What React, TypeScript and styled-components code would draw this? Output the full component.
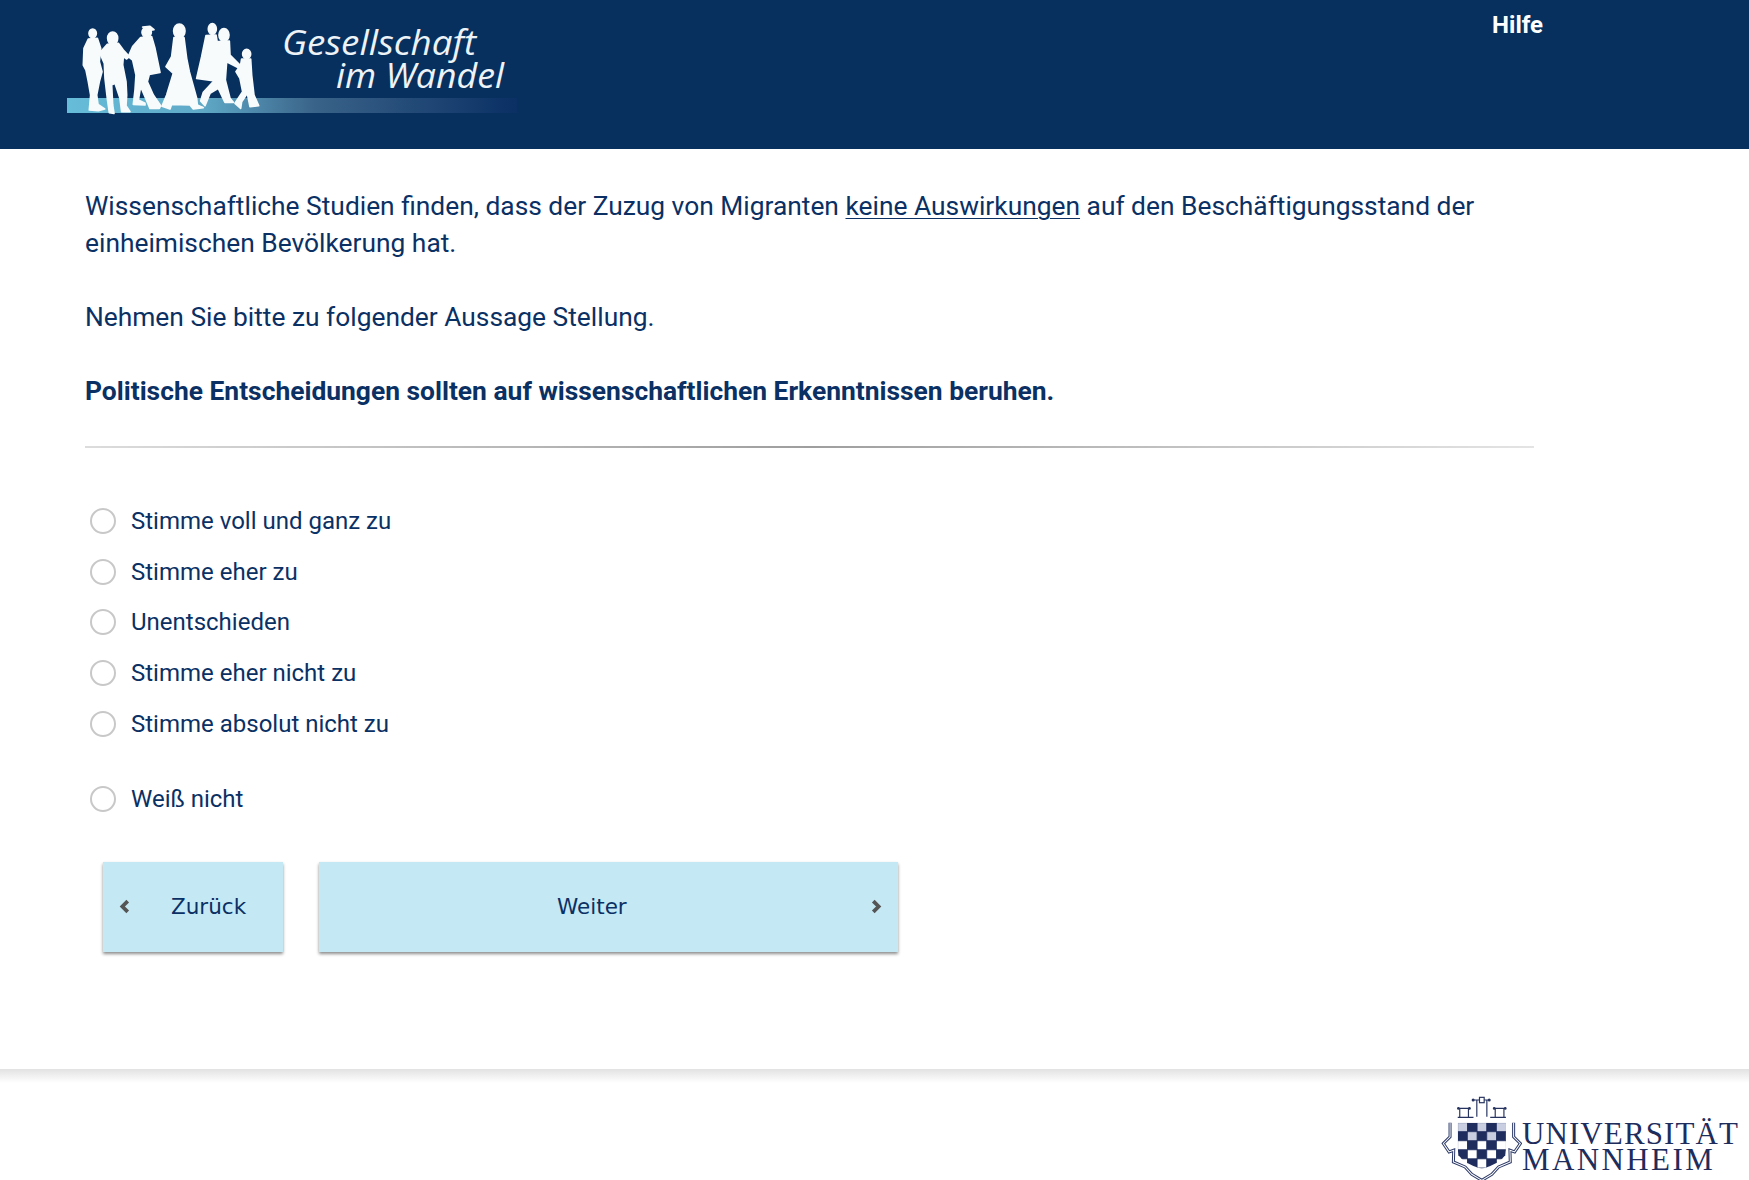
import styled, { createGlobalStyle } from "styled-components";

const navy = "#0a3064";

const GlobalStyle = createGlobalStyle`
  html, body {
    margin: 0;
    padding: 0;
    background: #fff;
    overflow: hidden;
  }
  body {
    font-family: Roboto, "Liberation Sans", sans-serif;
    color: ${navy};
  }
`;

const options = [
  "Stimme voll und ganz zu",
  "Stimme eher zu",
  "Unentschieden",
  "Stimme eher nicht zu",
  "Stimme absolut nicht zu",
];

const LogoMark = () => (
  <LogoSvg viewBox="0 0 450 120" width="450" height="120" aria-label="Gesellschaft im Wandel">
    <defs>
      <linearGradient id="band" x1="0" x2="1" y1="0" y2="0">
        <stop offset="0" stopColor="#66bdd9" />
        <stop offset="0.3" stopColor="#5fa9c7" />
        <stop offset="0.55" stopColor="#3a6389" />
        <stop offset="1" stopColor="#0a3064" />
      </linearGradient>
      <filter id="soft">
        <feGaussianBlur stdDeviation="0.4" />
      </filter>
    </defs>
    <rect x="0" y="88" width="450" height="15" fill="url(#band)" />
    <g
      transform="translate(3,5) scale(0.3333)"
      fill="#f8fbfb"
      stroke="#f8fbfb"
      strokeWidth="5"
      strokeLinejoin="round"
      filter="url(#soft)"
    >
      {/* family walking, left to right */}
      <ellipse cx="68" cy="55" rx="11" ry="13" />
      <path d="M55 72L82 70L92 100L88 140L96 170L88 200L80 240L84 268L104 282L85 287L58 285L62 240L55 200L48 165L40 150L42 100Z" />
      <ellipse cx="128" cy="70" rx="15" ry="19" />
      <path d="M112 88L145 85L160 105L178 125L170 132L160 125L158 150L168 200L170 240L168 272L180 290L155 290L150 250L135 205L125 210L128 270L132 295L118 293L112 250L105 190L103 145L92 120L88 115Z" />
      <ellipse cx="230" cy="52" rx="14" ry="15" />
      <path d="M218 36L240 34L252 44L240 46Z" />
      <path d="M212 68L245 65L255 100L270 172L238 178L232 200L250 240L272 272L268 280L240 280L225 245L212 215L205 255L225 265L225 270L190 268L195 225L198 180L188 135L175 125L188 95Z" />
      <ellipse cx="328" cy="48" rx="17" ry="21" />
      <path d="M312 68L342 68L350 130L358 170L380 250L382 270L400 278L370 282L360 270L305 268L300 282L276 274L290 240L310 175L288 155L305 125Z" />
      <ellipse cx="427" cy="42" rx="12" ry="16" />
      <path d="M408 62L438 60L445 100L450 200L380 190L395 125Z" />
      <ellipse cx="462" cy="60" rx="15" ry="19" />
      <path d="M445 80L478 78L480 120L510 150L505 158L470 140L466 195L480 250L490 262L465 262L445 220L420 235L405 272L392 258L400 232L430 200L440 130Z" />
      <ellipse cx="530" cy="117" rx="12" ry="14" />
      <path d="M515 132L542 132L545 180L552 240L566 272L540 275L532 235L515 260L512 280L495 265L518 230L510 190L498 170L512 150Z" />
    </g>
    <LogoText x="215" y="44.5" textLength="194" lengthAdjust="spacingAndGlyphs">
      Gesellschaft
    </LogoText>
    <LogoText x="269" y="78" textLength="168" lengthAdjust="spacingAndGlyphs">
      im Wandel
    </LogoText>
  </LogoSvg>
);

const ShieldMark = () => {
  const cells = [];
  for (let row = 0; row < 5; row++) {
    for (let col = 0; col < 5; col++) {
      cells.push(
        <rect
          key={`${row}-${col}`}
          x={78 + col * 29}
          y={108 + row * 27}
          width="29"
          height="27"
          fill={(row + col) % 2 === 1 ? "#1f2d5e" : row < 2 ? "#c9cfe0" : "#fff"}
          stroke="#1f2d5e"
          strokeWidth="2"
        />,
      );
    }
  }
  const outline =
    "M55 108V150L35 170L52 195L66 190L65 225L100 240L120 262L150 280L180 262L200 240L235 225L234 190L248 195L265 170L245 150V108";
  return (
    <svg viewBox="25 25 245 260" width="82" height="87" aria-hidden="true">
      <defs>
        <clipPath id="shield">
          <path d="M78 108H222V185L220 205Q200 232 150 246Q100 232 80 205L78 185Z" />
        </clipPath>
      </defs>
      <g clipPath="url(#shield)">{cells}</g>
      <g fill="none" strokeLinejoin="miter">
        <path d={outline} stroke="#2d3a68" strokeWidth="9" />
        <path d={outline} stroke="#fff" strokeWidth="3" />
      </g>
      <g fill="none" stroke="#26335f" strokeWidth="3.5">
        <path d="M122 40H175M135 40V90M165 40V90" />
        <rect x="143" y="32" width="14" height="16" fill="#fff" />
        <path d="M78 65H115M84 65V92M110 65V92M78 92H125" />
        <path d="M185 65H222M190 65V92M216 65V92M175 92H222" />
      </g>
      <g fill="#26335f">
        <circle cx="124" cy="40" r="4.5" />
        <circle cx="172" cy="40" r="4.5" />
        <circle cx="80" cy="65" r="4" />
        <circle cx="113" cy="65" r="4" />
        <circle cx="187" cy="65" r="4" />
        <circle cx="220" cy="65" r="4" />
      </g>
    </svg>
  );
};

const App = () => {
  return (
    <Page>
      <GlobalStyle />
      <Header>
        <LogoMark />
        <HelpLink>Hilfe</HelpLink>
      </Header>
      <Main>
        <Paragraph>
          Wissenschaftliche Studien finden, dass der Zuzug von Migranten{" "}
          <Emphasis>keine Auswirkungen</Emphasis> auf den Beschäftigungsstand der
          einheimischen Bevölkerung hat.
        </Paragraph>
        <Paragraph>Nehmen Sie bitte zu folgender Aussage Stellung.</Paragraph>
        <Statement>
          Politische Entscheidungen sollten auf wissenschaftlichen Erkenntnissen beruhen.
        </Statement>
        <Divider />
        <OptionList>
          {options.map((label) => (
            <Option key={label}>
              <Radio />
              {label}
            </Option>
          ))}
        </OptionList>
        <DontKnow>
          <Radio />
          Weiß nicht
        </DontKnow>
        <ButtonRow>
          <NavButton type="button" $width={180} $inset={16}>
            <Chevron viewBox="0 0 10 14">
              <polyline points="8,2 3,7 8,12" />
            </Chevron>
            <ButtonLabel $offset={41}>Zurück</ButtonLabel>
          </NavButton>
          <NavButton type="button" $width={579} $inset={238}>
            <ButtonLabel $offset={0}>Weiter</ButtonLabel>
            <Chevron viewBox="0 0 10 14" $pushRight>
              <polyline points="2,2 7,7 2,12" />
            </Chevron>
          </NavButton>
        </ButtonRow>
      </Main>
      <Footer>
        <UniLogo>
          <ShieldMark />
          <UniName>
            <UniLine $spacing={1.1}>UNIVERSITÄT</UniLine>
            <UniLine $spacing={2.4}>MANNHEIM</UniLine>
          </UniName>
        </UniLogo>
      </Footer>
    </Page>
  );
};

const Page = styled.div`
  width: 1749px;
  height: 1180px;
  display: flex;
  flex-direction: column;
  overflow: hidden;
`;

const Header = styled.header`
  height: 149px;
  background: #07305f;
  display: flex;
  align-items: flex-start;
  justify-content: space-between;
  padding: 0 206px 0 67px;
  flex-shrink: 0;
`;

const LogoSvg = styled.svg`
  margin-top: 10px;
  display: block;
`;

const LogoText = styled.text`
  font-family: "Open Sans", "DejaVu Sans", sans-serif;
  font-style: italic;
  font-size: 34px;
  fill: #edf3f7;
`;

const HelpLink = styled.a`
  color: #fff;
  font-size: 24px;
  font-weight: 700;
  line-height: 30px;
  margin-top: 10px;
`;

const Main = styled.main`
  padding: 39px 0 0 85px;
  height: 920px;
  box-sizing: border-box;
  flex-shrink: 0;
`;

const Paragraph = styled.p`
  margin: 0 0 37px;
  width: 1420px;
  font-size: 26.35px;
  line-height: 37px;
`;

const Emphasis = styled.span`
  text-decoration: underline;
  text-decoration-thickness: 1px;
  text-underline-offset: 3px;
`;

const Statement = styled(Paragraph)`
  font-size: 26.4px;
  font-weight: 700;
  margin-bottom: 36px;
`;

const Divider = styled.hr`
  width: 1449px;
  height: 2px;
  border: 0;
  margin: 0 0 47.5px;
  background: linear-gradient(90deg, #dcdcdc, #9e9e9e 50%, #e4e4e4);
`;

const OptionList = styled.div`
  display: flex;
  flex-direction: column;
  margin-bottom: 24px;
`;

const Option = styled.label`
  display: flex;
  align-items: center;
  gap: 15px;
  height: 50.75px;
  padding-left: 5px;
  font-size: 24px;
`;

const DontKnow = styled(Option)`
  margin-bottom: 37.5px;
`;

const Radio = styled.span`
  width: 26px;
  height: 26px;
  box-sizing: border-box;
  border: 2px solid #c8c8c8;
  border-radius: 50%;
  background: #fff;
  flex-shrink: 0;
`;

const ButtonRow = styled.div`
  display: flex;
  gap: 36px;
  padding-left: 18px;
`;

const NavButton = styled.button<{ $width: number; $inset: number }>`
  width: ${(p) => p.$width}px;
  height: 90px;
  display: flex;
  align-items: center;
  padding: 0 16px 0 ${(p) => p.$inset}px;
  border: 0;
  background: #c5e8f5;
  color: ${navy};
  box-shadow: 0 2px 3px rgba(0, 0, 0, 0.45);
  font-family: "DejaVu Sans", Verdana, sans-serif;
  font-size: 21.5px;
  cursor: pointer;
`;

const ButtonLabel = styled.span<{ $offset: number }>`
  margin-left: ${(p) => p.$offset}px;
`;

const Chevron = styled.svg<{ $pushRight?: boolean }>`
  width: 11px;
  height: 15px;
  margin-left: ${(p) => (p.$pushRight ? "auto" : "0")};
  flex-shrink: 0;
  fill: none;
  stroke: #555;
  stroke-width: 3.5;
`;

const Footer = styled.footer`
  flex: 1;
  display: flex;
  justify-content: flex-end;
  align-items: flex-start;
  padding: 0 10px 0 0;
  background: linear-gradient(180deg, #e2e2e2 0, #fff 14px);
`;

const UniLogo = styled.div`
  display: flex;
  align-items: flex-start;
  gap: 0;
  margin-top: 26px;
`;

const UniName = styled.div`
  margin-top: 26px;
  color: #1e2d5c;
  font-family: "Liberation Serif", serif;
  font-size: 31px;
  line-height: 26px;
`;

const UniLine = styled.div<{ $spacing: number }>`
  letter-spacing: ${(p) => p.$spacing}px;
`;

export default App;
